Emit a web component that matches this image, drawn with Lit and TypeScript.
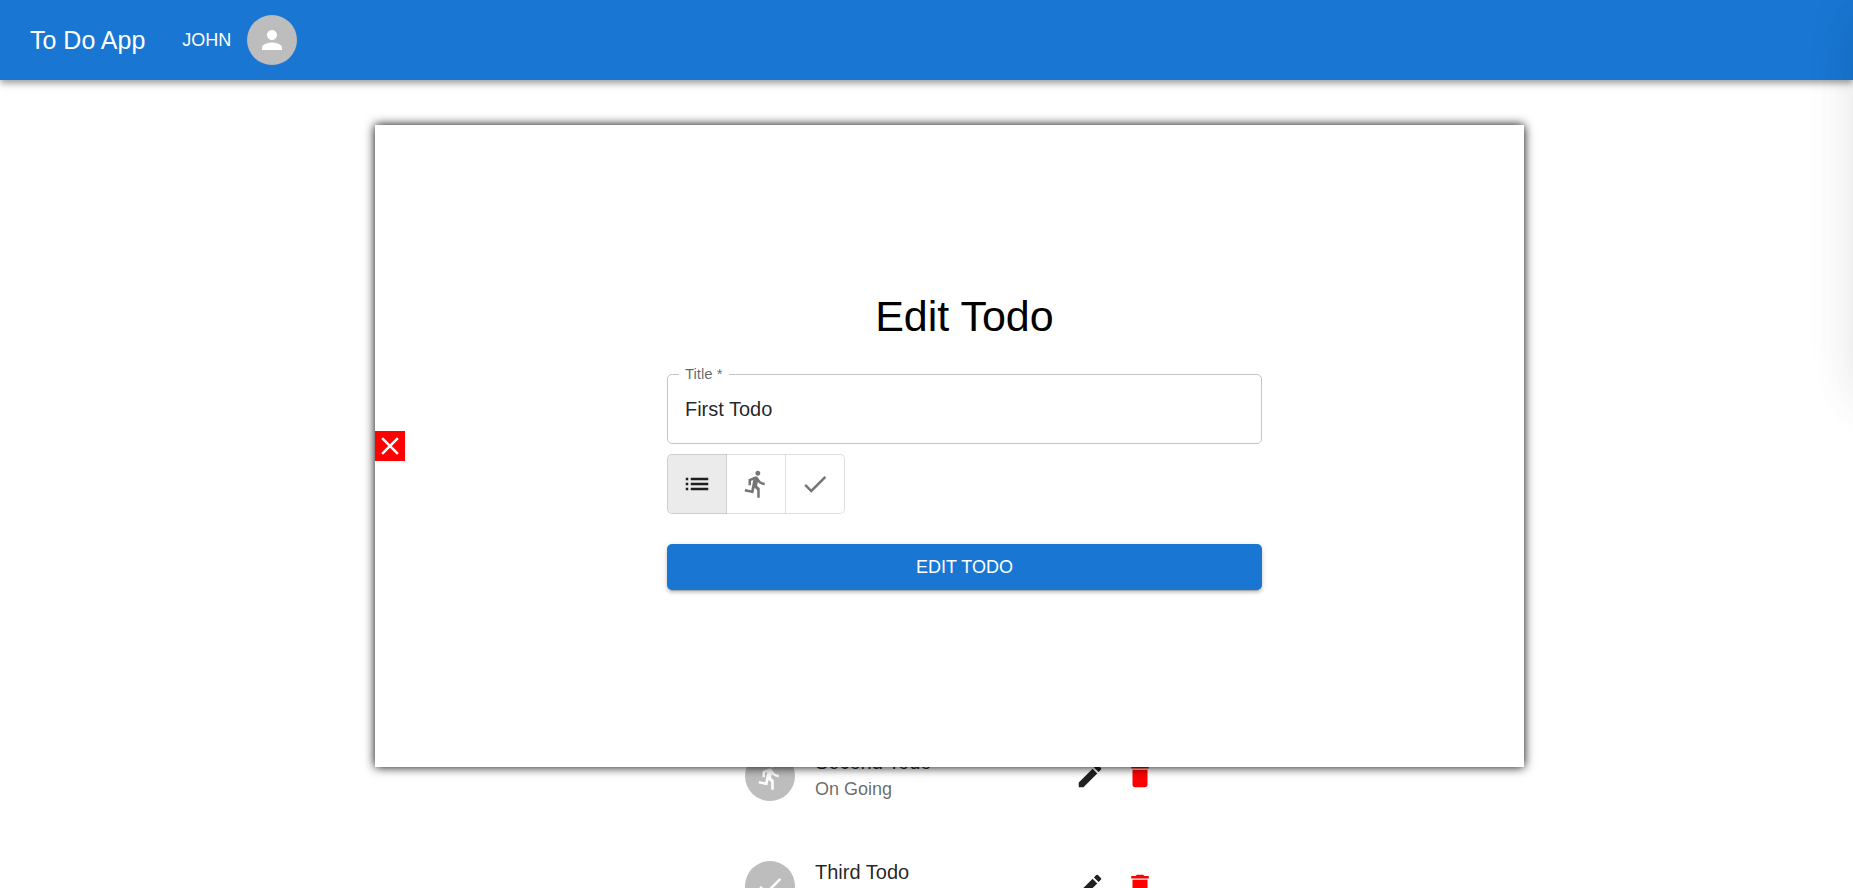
import { LitElement, html, css, svg } from "lit";
import { customElement, property, state } from "lit/decorators.js";

const ICONS: Record<string, string> = {
  person:
    "M12 12c2.21 0 4-1.79 4-4s-1.79-4-4-4-4 1.79-4 4 1.79 4 4 4zm0 2c-2.67 0-8 1.34-8 4v2h16v-2c0-2.66-5.33-4-8-4z",
  list: "M3 13h2v-2H3v2zm0 4h2v-2H3v2zm0-8h2V7H3v2zm4 4h14v-2H7v2zm0 4h14v-2H7v2zM7 7v2h14V7H7z",
  run: "M13.49 5.48c1.1 0 2-.9 2-2s-.9-2-2-2-2 .9-2 2 .9 2 2 2zm-3.6 13.9l1-4.4 2.1 2v6h2v-7.5l-2.1-2 .6-3c1.3 1.5 3.3 2.5 5.5 2.5v-2c-1.9 0-3.5-1-4.3-2.4l-1-1.6c-.4-.6-1-1-1.7-1-.3 0-.5.1-.8.1l-5.2 2.2v4.7h2v-3.4l1.8-.7-1.6 8.1-4.9-1-.4 2 7 1.4z",
  check: "M9 16.17L4.83 12l-1.42 1.41L9 19 21 7l-1.41-1.41z",
  edit: "M3 17.25V21h3.75L17.81 9.94l-3.75-3.75L3 17.25zM20.71 7.04c.39-.39.39-1.02 0-1.41l-2.34-2.34a.9959.9959 0 0 0-1.41 0l-1.83 1.83 3.75 3.75 1.83-1.83z",
  remove: "M6 19c0 1.1.9 2 2 2h8c1.1 0 2-.9 2-2V7H6v12zM19 4h-3.5l-1-1h-5l-1 1H5v2h14V4z",
  close:
    "M19 6.41L17.59 5 12 10.59 6.41 5 5 6.41 10.59 12 5 17.59 6.41 19 12 13.41 17.59 19 19 17.59 13.41 12z",
};

@customElement("app-icon")
export class AppIcon extends LitElement {
  @property() name = "";

  static styles = css`
    :host {
      display: block;
      width: 30px;
      height: 30px;
    }
    .glyph {
      display: block;
      width: 100%;
      height: 100%;
      fill: currentColor;
    }
  `;

  render() {
    return html`<svg class="glyph" viewBox="0 0 24 24" aria-hidden="true">
      ${svg`<path d=${ICONS[this.name] ?? ""}></path>`}
    </svg>`;
  }
}

interface Todo {
  title: string;
  status: string;
}

const STATUSES = [
  { label: "Pending", icon: "list" },
  { label: "On Going", icon: "run" },
  { label: "Done", icon: "check" },
];

@customElement("app-root")
export class AppRoot extends LitElement {
  @state() private selected = "Pending";
  @state() private modalOpen = true;
  @state() private todos: Todo[] = [
    { title: "First Todo", status: "Pending" },
    { title: "Second Todo", status: "On Going" },
    { title: "Third Todo", status: "Done" },
  ];

  static styles = css`
    :host {
      display: block;
      position: relative;
      height: 100vh;
      overflow: hidden;
      background: #fff;
      color: rgba(0, 0, 0, 0.87);
      font-family: "Liberation Sans", Arial, sans-serif;
      font-size: 20px;
      line-height: 30px;
    }
    * {
      box-sizing: border-box;
    }
    button,
    input {
      font: inherit;
      color: inherit;
      margin: 0;
      padding: 0;
      border: 0;
      background: none;
    }
    button {
      cursor: pointer;
    }
    .bar {
      display: flex;
      align-items: center;
      height: 80px;
      padding: 0 30px;
      background: #1976d2;
      color: #fff;
      box-shadow:
        0 3px 5px -1px rgba(0, 0, 0, 0.2),
        0 5px 6px rgba(0, 0, 0, 0.14),
        0 1px 13px rgba(0, 0, 0, 0.12);
    }
    .brand {
      margin: 0 37px 0 0;
      font-size: 25px;
      font-weight: 400;
      line-height: 40px;
    }
    .user {
      display: flex;
      align-items: center;
      gap: 16px;
      font-size: 18px;
      text-transform: uppercase;
    }
    .avatar {
      display: flex;
      flex: none;
      align-items: center;
      justify-content: center;
      width: 50px;
      height: 50px;
      border-radius: 50%;
      background: #bdbdbd;
      color: #fff;
    }
    .page {
      display: flex;
      justify-content: center;
      padding: 531px 0 0 57px;
    }
    .todos {
      width: 420px;
      margin: 0;
      padding: 0;
      list-style: none;
    }
    .todo {
      display: flex;
      align-items: center;
      height: 110px;
    }
    .summary {
      flex: 1;
      margin-left: 20px;
      padding-bottom: 3px;
    }
    .name,
    .status {
      margin: 0;
    }
    .status {
      font-size: 18px;
      line-height: 25px;
      color: rgba(0, 0, 0, 0.6);
    }
    .action {
      padding: 10px;
    }
    .danger {
      color: #f00;
    }
    .modal {
      position: absolute;
      top: 125px;
      left: 375px;
      display: flex;
      align-items: center;
      width: 62%;
      height: 642px;
      background: #fff;
      box-shadow: 0 0 10px #000;
    }
    .close {
      flex: none;
      background: #f00;
      color: #fff;
    }
    .form {
      display: flex;
      flex-direction: column;
      width: 595px;
      margin: 0 auto;
      padding-bottom: 12px;
    }
    .heading {
      margin: 0 0 22px;
      font-size: 43px;
      font-weight: 400;
      line-height: 52px;
      color: #000;
      text-align: center;
    }
    .field {
      height: 80px;
      margin: 0 0 10px;
      padding: 0 11px;
      border: 1px solid rgba(0, 0, 0, 0.23);
      border-radius: 5px;
    }
    .caption {
      padding: 0 6px;
      font-size: 15px;
      line-height: 20px;
      color: rgba(0, 0, 0, 0.6);
    }
    .text {
      display: block;
      width: 100%;
      height: 50px;
      padding: 0 6px;
      outline: 0;
    }
    .choices {
      display: flex;
      margin-bottom: 30px;
    }
    .choice {
      padding: 14px;
      border: 1px solid rgba(0, 0, 0, 0.12);
      color: rgba(0, 0, 0, 0.54);
    }
    .choice + .choice {
      margin-left: -1px;
      border-left-color: transparent;
    }
    .choice:first-child {
      border-radius: 5px 0 0 5px;
    }
    .choice:last-child {
      border-radius: 0 5px 5px 0;
    }
    .choice[aria-pressed="true"] {
      background: rgba(0, 0, 0, 0.08);
      color: rgba(0, 0, 0, 0.87);
    }
    .submit {
      height: 46px;
      border-radius: 5px;
      background: #1976d2;
      color: #fff;
      font-size: 18px;
      text-transform: uppercase;
      box-shadow:
        0 4px 1px -3px rgba(0, 0, 0, 0.2),
        0 3px 3px rgba(0, 0, 0, 0.14),
        0 1px 6px rgba(0, 0, 0, 0.12);
    }
    .drawer {
      position: absolute;
      top: 0;
      left: 100%;
      width: 320px;
      height: 370px;
      margin-left: 16px;
      background: #fff;
      box-shadow:
        0 30px 48px 4px rgba(0, 0, 0, 0.1),
        0 11px 58px 10px rgba(0, 0, 0, 0.07);
    }
  `;

  private submit(event: Event) {
    event.preventDefault();
    const title = this.renderRoot.querySelector<HTMLInputElement>("#title")!.value;
    this.todos = [{ title, status: this.selected }, ...this.todos.slice(1)];
    this.modalOpen = false;
  }

  private iconFor(status: string) {
    return STATUSES.find((s) => s.label === status)!.icon;
  }

  private renderTodo(todo: Todo) {
    return html`<li class="todo">
      <span class="avatar"><app-icon name=${this.iconFor(todo.status)}></app-icon></span>
      <div class="summary">
        <p class="name">${todo.title}</p>
        <p class="status">${todo.status}</p>
      </div>
      <button class="action" type="button" aria-label="Edit" @click=${() => (this.modalOpen = true)}>
        <app-icon name="edit"></app-icon>
      </button>
      <button
        class="action danger"
        type="button"
        aria-label="Delete"
        @click=${() => (this.todos = this.todos.filter((t) => t !== todo))}
      >
        <app-icon name="remove"></app-icon>
      </button>
    </li>`;
  }

  private renderModal() {
    return html`<section class="modal" role="dialog" aria-labelledby="heading">
      <button class="close" type="button" aria-label="Close" @click=${() => (this.modalOpen = false)}>
        <app-icon name="close"></app-icon>
      </button>
      <form class="form" @submit=${this.submit}>
        <h2 class="heading" id="heading">Edit Todo</h2>
        <fieldset class="field">
          <legend class="caption"><label for="title">Title *</label></legend>
          <input class="text" id="title" type="text" required .value=${"First Todo"} />
        </fieldset>
        <div class="choices" role="group" aria-label="Status">
          ${STATUSES.map(
            (s) => html`<button
              class="choice"
              type="button"
              aria-label=${s.label}
              aria-pressed=${this.selected === s.label ? "true" : "false"}
              @click=${() => (this.selected = s.label)}
            >
              <app-icon name=${s.icon}></app-icon>
            </button>`,
          )}
        </div>
        <button class="submit" type="submit">Edit Todo</button>
      </form>
    </section>`;
  }

  render() {
    return html`
      <header class="bar">
        <h1 class="brand">To Do App</h1>
        <button class="user" type="button">
          John
          <span class="avatar"><app-icon name="person"></app-icon></span>
        </button>
      </header>
      <main class="page">
        <ul class="todos">
          ${this.todos.map((todo) => this.renderTodo(todo))}
        </ul>
      </main>
      ${this.modalOpen ? this.renderModal() : null}
      <aside class="drawer" aria-hidden="true"></aside>
    `;
  }
}
